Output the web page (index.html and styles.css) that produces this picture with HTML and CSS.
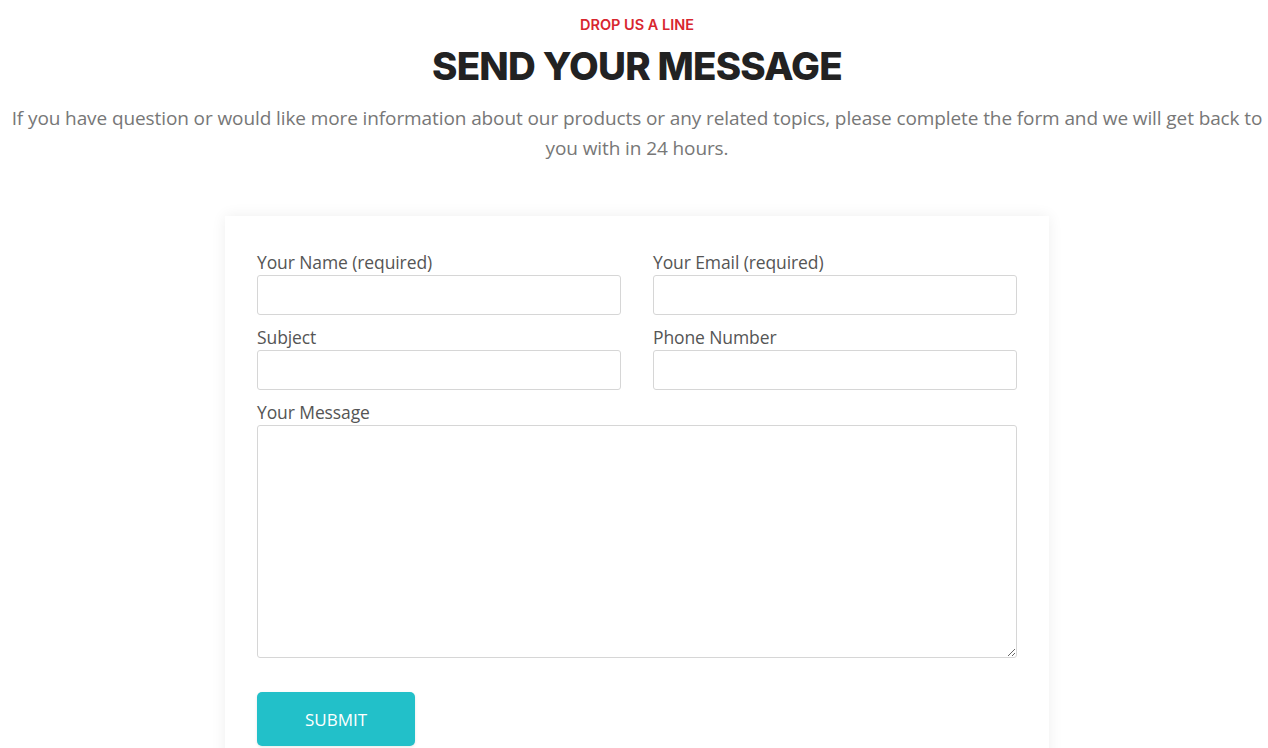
FILE: index.html
```html
<!DOCTYPE html>
<html>
<head>
    <title>Contact</title>
    <meta name="viewport" content="width=device-width, initial-scale=1.0">
    <link rel="stylesheet" href="styles.css">
</head>
<body>
    <!-- Section heading -->
    <div class="section-head">
        <div class="eyebrow">DROP US A LINE</div>
        <h2>SEND YOUR MESSAGE</h2>
        <p>If you have question or would like more information about our products or any related topics, please complete the form and we will get back to you with in 24 hours.</p>
    </div>

    <!-- Contact form -->
    <div class="form-card">
        <form>
            <div class="form-row">
                <div class="field">
                    <label>Your Name (required)</label>
                    <input type="text">
                </div>
                <div class="field">
                    <label>Your Email (required)</label>
                    <input type="email">
                </div>
            </div>
            <div class="form-row">
                <div class="field">
                    <label>Subject</label>
                    <input type="text">
                </div>
                <div class="field">
                    <label>Phone Number</label>
                    <input type="text">
                </div>
            </div>
            <div class="field">
                <label>Your Message</label>
                <textarea></textarea>
            </div>
            <button type="submit" class="submit-btn">SUBMIT</button>
        </form>
    </div>
</body>
</html>
```

FILE: styles.css
```css
:root {
    --accent: #d8262f;
    --teal: #22c0c9;
    --text: #444;
}

body {
    margin: 0;
    padding-left: 6px;
    font-family: "Open Sans", "Noto Sans", sans-serif;
    background: #fff;
    color: var(--text);
}

.section-head {
    text-align: center;
    padding: 16px 0 0;
}

.eyebrow {
    color: var(--accent);
    font-family: "Inter", sans-serif;
    font-weight: 600;
    font-size: 14.5px;
    line-height: 18px;
}

.section-head h2 {
    margin: 5px 0 0;
    font-family: "Inter", sans-serif;
    font-weight: 800;
    font-size: 38.5px;
    line-height: 54px;
    color: #222;
    letter-spacing: -0.8px;
}

.section-head p {
    margin: 10px 0 0;
    font-size: 19px;
    line-height: 30px;
    color: #777;
    letter-spacing: -0.1px;
}

.form-card {
    width: 760px;
    margin: 53px auto 0;
    padding: 34px 32px 40px;
    background: #fff;
    box-shadow: 0 0 14px rgba(0,0,0,0.07);
}

.form-row {
    display: grid;
    grid-template-columns: 1fr 1fr;
    gap: 32px;
}

.field {
    display: flex;
    flex-direction: column;
    margin-bottom: 10px;
}

.field label {
    font-size: 17.5px;
    line-height: 25px;
    color: #555;
    letter-spacing: -0.1px;
}

.field input,
.field textarea {
    box-sizing: border-box;
    width: 100%;
    height: 40px;
    border: 1px solid #d6d6d6;
    border-radius: 3px;
    font: inherit;
}

.field textarea {
    height: 233px;
    resize: vertical;
}

.submit-btn {
    margin-top: 24px;
    width: 158px;
    height: 54px;
    border: none;
    border-radius: 5px;
    background: var(--teal);
    color: #fff;
    font-family: "Open Sans", sans-serif;
    font-size: 17px;
    box-shadow: 0 1px 3px rgba(0,0,0,0.1);
}
```
